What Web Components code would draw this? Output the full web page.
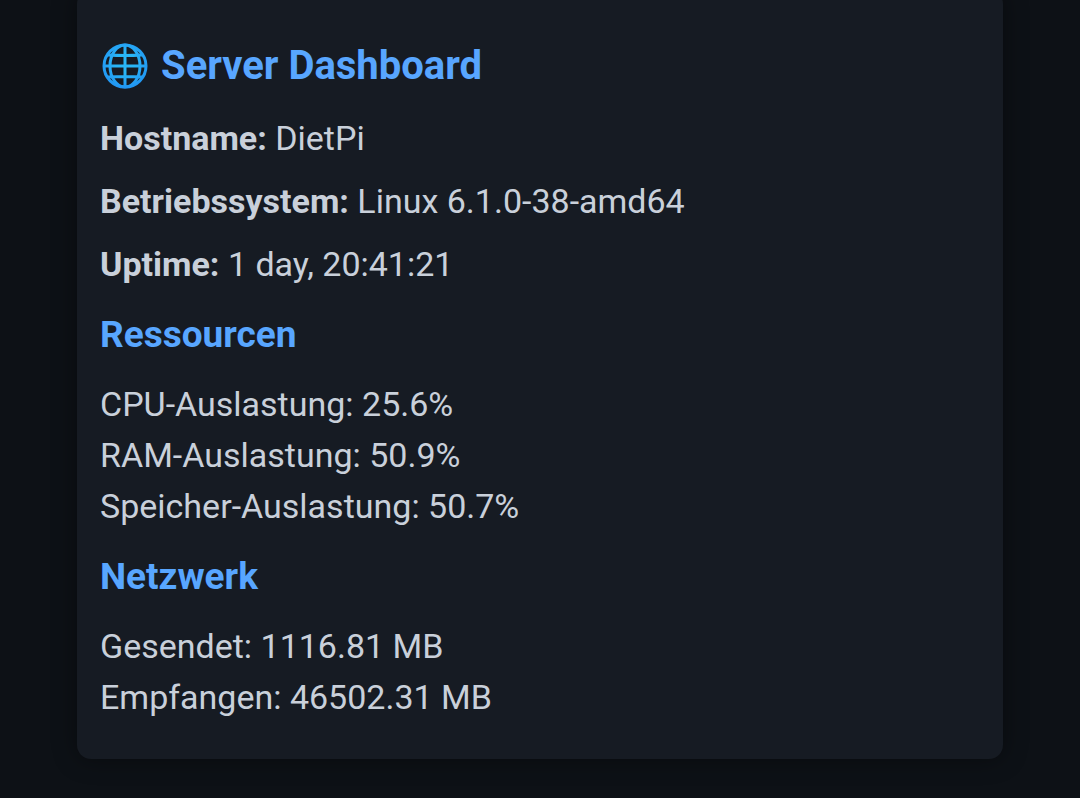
<!DOCTYPE html>
<html lang="de">
<head>
<meta charset="utf-8">
<meta name="viewport" content="width=device-width, initial-scale=1">
<title>Server Dashboard</title>
<style>
html { background: #0d1116; }
body { margin: 0; background: #0d1116; color: #c9d0da; font: 34px/51px Roboto, "Liberation Sans", sans-serif; }
</style>
</head>
<body>
<server-dashboard>
  <info-row label="Hostname">DietPi</info-row>
  <info-row label="Betriebssystem">Linux 6.1.0-38-amd64</info-row>
  <info-row label="Uptime">1 day, 20:41:21</info-row>
  <stat-section heading="Ressourcen">
    <stat-item>CPU-Auslastung: 25.6%</stat-item>
    <stat-item>RAM-Auslastung: 50.9%</stat-item>
    <stat-item>Speicher-Auslastung: 50.7%</stat-item>
  </stat-section>
  <stat-section heading="Netzwerk">
    <stat-item>Gesendet: 1116.81 MB</stat-item>
    <stat-item>Empfangen: 46502.31 MB</stat-item>
  </stat-section>
</server-dashboard>
<script>
class BaseElement extends HTMLElement {
  constructor() {
    super();
    this.attachShadow({ mode: 'open' }).innerHTML = this.constructor.markup;
  }
}

customElements.define('globe-icon', class extends BaseElement {
  static markup = `
    <style>:host { display: block; width: 46px; height: 46px; } svg { display: block; width: 100%; height: 100%; }</style>
    <svg viewBox="0 0 46 46" fill="none" stroke-width="3" aria-hidden="true">
      <defs><radialGradient id="g" gradientUnits="userSpaceOnUse" cx="23" cy="20" r="25">
        <stop offset=".4" stop-color="#29b6f6"/><stop offset="1" stop-color="#2196f3"/>
      </radialGradient></defs>
      <g stroke="url(#g)">
        <circle cx="23" cy="23" r="21"/>
        <ellipse cx="23" cy="23" rx="15" ry="21"/>
        <path d="M22.99 2 23 44M2 23 44 23.01M6 12Q23 13 40 12M6 34Q23 33 40 34"/>
      </g>
    </svg>`;
});

customElements.define('info-row', class extends BaseElement {
  static markup = `
    <style>:host { display: block; } p { margin: 0 0 12px; }</style>
    <p><strong></strong> <slot></slot></p>`;
  connectedCallback() {
    this.shadowRoot.querySelector('strong').textContent = this.getAttribute('label') + ':';
  }
});

customElements.define('stat-item', class extends BaseElement {
  static markup = `<style>:host { display: block; }</style><slot></slot>`;
  connectedCallback() { this.setAttribute('role', 'listitem'); }
});

customElements.define('stat-section', class extends BaseElement {
  static markup = `
    <style>
      :host { display: block; margin-top: 17px; }
      h2 { margin: 0 0 16px; color: #58a6ff; font-size: 37px; line-height: 56px; font-weight: 700; }
    </style>
    <section><h2></h2><div role="list"><slot></slot></div></section>`;
  connectedCallback() {
    this.shadowRoot.querySelector('h2').textContent = this.getAttribute('heading');
  }
});

customElements.define('server-dashboard', class extends BaseElement {
  static markup = `
    <style>
      :host { display: flow-root; }
      main {
        margin: -10px 77px 39px; padding: 45px 23px 36px;
        background: #161b23; border-radius: 14px; box-shadow: 0 0 24px rgba(0, 0, 0, .4);
      }
      header { display: flex; align-items: center; gap: 13px; margin: 0 0 16px; padding-left: 2px; }
      h1 { margin: 0; color: #58a6ff; font-size: 40px; line-height: 62px; font-weight: 700; }
    </style>
    <main>
      <header><globe-icon></globe-icon><h1>Server Dashboard</h1></header>
      <slot></slot>
    </main>`;
});
</script>
</body>
</html>
